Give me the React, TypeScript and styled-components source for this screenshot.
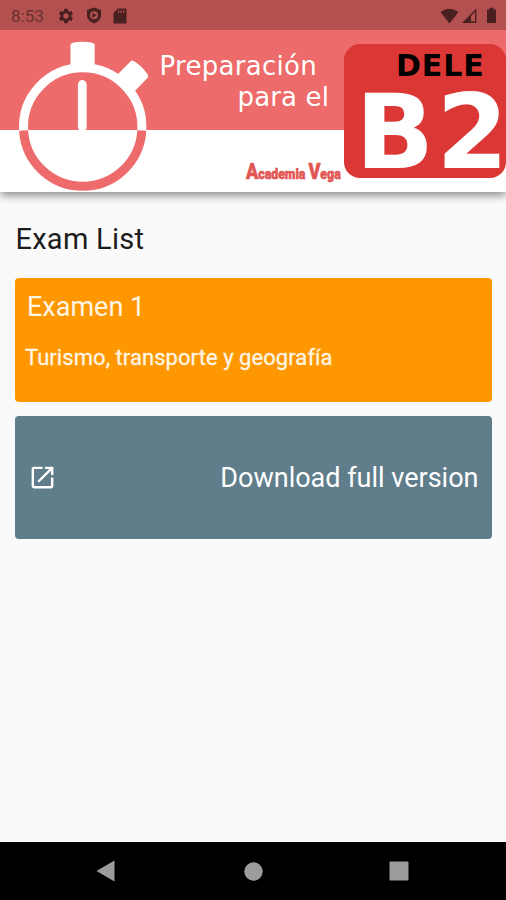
import React from 'react';
import styled, { createGlobalStyle } from 'styled-components';
import { MdOpenInNew, MdSettings } from 'react-icons/md';

const coral = '#ed6b6a';

const GlobalStyle = createGlobalStyle`
  * { box-sizing: border-box; }
  body { margin: 0; background: #fafafa; }
`;

const Screen = styled.div`
  width: 506px;
  height: 900px;
  display: flex;
  flex-direction: column;
  overflow: hidden;
  background: #fafafa;
  font-family: Roboto, sans-serif;
`;

const StatusBar = styled.header`
  height: 30px;
  flex: none;
  z-index: 1;
  display: flex;
  align-items: center;
  padding: 1px 9px 0 11px;
  background: #b25150;
  color: #4a1f20;
`;

const Clock = styled.span`
  width: 46px;
  font-size: 17px;
  line-height: 20px;
  color: #6b2f30;
`;

const StatusIcons = styled.div<{ $gap: number; $end?: boolean }>`
  display: flex;
  align-items: center;
  gap: ${(p) => p.$gap}px;
  margin-left: ${(p) => (p.$end ? 'auto' : '0')};
  svg { display: block; }
`;

const Banner = styled.section`
  height: 162px;
  flex: none;
  display: flex;
  background: linear-gradient(${coral} 100.5px, #fff 100.5px);
  box-shadow: 0 3px 9px rgba(0, 0, 0, 0.48);
`;

const Watch = styled.svg`
  display: block;
  flex: none;
`;

const Titles = styled.div`
  width: 184px;
  flex: none;
  display: flex;
  flex-direction: column;
  font-family: 'DejaVu Sans', sans-serif;
  font-size: 26px;
  line-height: 31px;
  color: #fff;
  padding-top: 21px;
`;

const TitleLine = styled.span<{ $indent: number; $spacing: number }>`
  margin-left: ${(p) => p.$indent}px;
  letter-spacing: ${(p) => p.$spacing}px;
  white-space: nowrap;
`;

const Academy = styled.span`
  margin: 47px 0 0 86px;
  font-family: Roboto, sans-serif;
  font-weight: 900;
  font-size: 15px;
  line-height: 24px;
  color: #e25654;
  white-space: nowrap;
  transform: scaleX(0.82);
  transform-origin: left;
  -webkit-text-stroke: 0.6px #e25654;
`;

const Initial = styled.span`
  font-size: 22px;
`;

const Badge = styled.div`
  width: 162px;
  height: 134px;
  flex: none;
  margin-top: 13.5px;
  border-radius: 16px;
  background: #db3735;
  display: flex;
  flex-direction: column;
  font-family: 'DejaVu Sans', sans-serif;
  font-weight: 700;
  white-space: nowrap;
`;

const BadgeName = styled.span`
  padding: 7px 0 0 52px;
  font-size: 30px;
  line-height: 30px;
  letter-spacing: 0.9px;
  color: #000;
`;

const BadgeLevel = styled.span`
  padding-left: 11.5px;
  font-size: 103px;
  line-height: 103px;
  letter-spacing: 2.5px;
  color: #fff;
`;

const LastDigit = styled.span`
  letter-spacing: -6px;
`;

const Content = styled.main`
  flex: 1;
  display: flex;
  flex-direction: column;
  gap: 14px;
  padding: 30px 14px 0 15px;
`;

const Heading = styled.h1`
  margin: 0 0 8px 0.5px;
  font-size: 29px;
  line-height: 34px;
  font-weight: 400;
  letter-spacing: 0.25px;
  color: #1c1c1c;
`;

const ExamCard = styled.article`
  height: 124px;
  display: flex;
  flex-direction: column;
  padding: 13px 10px;
  border-radius: 4px;
  background: #ff9800;
  color: #fff5e4;
`;

const ExamTitle = styled.h2`
  margin: 0 0 21px 2px;
  font-size: 27px;
  line-height: 32px;
  font-weight: 400;
`;

const ExamTopic = styled.p`
  margin: 0;
  font-size: 22px;
  line-height: 28px;
  letter-spacing: 0.06px;
  -webkit-text-stroke: 0.3px #fff5e4;
`;

const DownloadCard = styled.article`
  height: 123px;
  display: flex;
  align-items: center;
  justify-content: space-between;
  padding: 0 13.5px 0 12.5px;
  border-radius: 4px;
  background: #607d8b;
  color: #fff;
  font-size: 27px;
  white-space: nowrap;
`;

const NavBar = styled.nav`
  height: 58px;
  flex: none;
  background: #000;
  display: flex;
  align-items: center;
  justify-content: space-between;
  padding: 0 97px 0 96px;
  svg { display: block; }
`;

export default function App() {
  return (
    <Screen>
      <GlobalStyle />
      <StatusBar>
        <Clock>8:53</Clock>
        <StatusIcons $gap={11}>
          <MdSettings size={18} />
          <svg width="16" height="17" viewBox="0 0 16 17">
            <path fill="currentColor" fillRule="evenodd" d="M8 .5 15 3v5c0 4-2.900 7-7 8.500C3.900 15 1 12 1 8V3ZM8 4.300A4 4 0 1 0 12 8.300A4 4 0 0 0 8 4.300Z" />
            <path fill="currentColor" d="M6.300 5.800 10.700 8.300 6.300 10.800Z" />
          </svg>
          <svg width="14" height="16" viewBox="0 0 14 16">
            <path fill="currentColor" fillRule="evenodd" d="M5 .5H12.500Q13.500.5 13.500 1.500V14.500Q13.500 15.500 12.500 15.500H1.500Q.5 15.500.5 14.500V5ZM5 2.500V5H6.200V2.500ZM7.500 2.500V5H8.700V2.500ZM10 2.500V5H11.200V2.500Z" />
          </svg>
        </StatusIcons>
        <StatusIcons $gap={3} $end>
          <svg width="19" height="16" viewBox="0 0 19 16">
            <path fill="currentColor" d="M.5 4Q9.500-2.500 18.500 4L9.500 15.500Z" />
          </svg>
          <svg width="15" height="16" viewBox="0 0 15 16">
            <path fill="none" stroke="currentColor" strokeWidth="1.400" d="M1.800 14.300H13.700V2.200Z" />
            <path fill="currentColor" d="M.5 15 9 6.500V15Z" />
          </svg>
          <svg width="17" height="17" viewBox="0 0 17 17">
            <path fill="currentColor" d="M9.500.7H13.500V2.500H16V16H7V2.500H9.500Z" />
          </svg>
        </StatusIcons>
      </StatusBar>
      <Banner>
        <Watch width="160" height="162" viewBox="0 30 160 162">
          <g fill="none" strokeWidth="9">
            <path stroke="#fff" d="M23.600 130.500A59.200 59.200 0 1 1 141.800 130.500" />
            <path stroke={coral} d="M23.600 130.500A59.200 59.200 0 0 0 141.800 130.500" />
          </g>
          <path fill="#fff" d="M70.500 67V44.500Q71 42 82.500 41.700Q94 42 94.700 44.500V67Z" />
          <path fill="#fff" d="M117.500 74.500 131.500 60.500Q134 60 141 66.500Q148.500 74 148.300 77L135 91Z" />
          <path stroke="#fff" strokeWidth="8.800" strokeLinecap="round" d="M82.300 84.500V127" />
        </Watch>
        <Titles>
          <TitleLine $indent={-0.5} $spacing={0.3}>Preparación</TitleLine>
          <TitleLine $indent={77.5} $spacing={0.15}>para el</TitleLine>
          <Academy>
            <Initial>A</Initial>cademia <Initial>V</Initial>ega
          </Academy>
        </Titles>
        <Badge>
          <BadgeName>DELE</BadgeName>
          <BadgeLevel>B<LastDigit>2</LastDigit></BadgeLevel>
        </Badge>
      </Banner>
      <Content>
        <Heading>Exam List</Heading>
        <ExamCard>
          <ExamTitle>Examen 1</ExamTitle>
          <ExamTopic>Turismo, transporte y geografía</ExamTopic>
        </ExamCard>
        <DownloadCard>
          <MdOpenInNew size={29} />
          <span>Download full version</span>
        </DownloadCard>
      </Content>
      <NavBar>
        <svg width="19" height="22" viewBox="0 0 19 22">
          <path fill="#9c9c9c" d="M18.500.5V21.500L.5 11Z" />
        </svg>
        <svg width="21" height="19" viewBox="0 0 21 19">
          <circle cx="11.500" cy="9.500" r="9.200" fill="#9c9c9c" />
        </svg>
        <svg width="20" height="20" viewBox="0 0 20 20">
          <rect x=".5" y=".5" width="19" height="19" rx="1" fill="#9c9c9c" />
        </svg>
      </NavBar>
    </Screen>
  );
}
